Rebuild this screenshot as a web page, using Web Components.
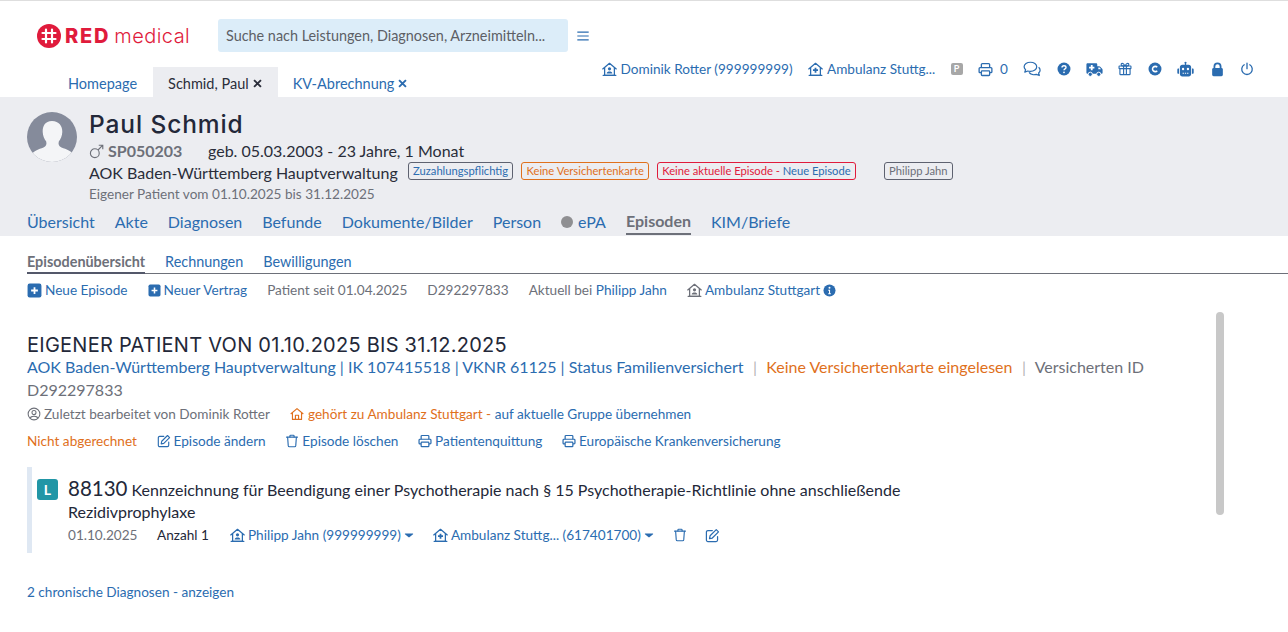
<!DOCTYPE html>
<html lang="de">
<head>
<meta charset="utf-8">
<title>RED medical</title>
<style>
  html, body { margin: 0; height: 100%; background: #fff; overflow: hidden; }
  body { font-family: Lato, "Liberation Sans", sans-serif; color: #2a2d3a; }
</style>
</head>
<body>
<rm-header></rm-header>
<rm-patient></rm-patient>
<rm-episodes></rm-episodes>

<script>
const ICONS = {
  housePerson: '<g fill="none" stroke="currentColor" stroke-width="1.35" stroke-linejoin="round" stroke-linecap="round"><path d="M.8 7.4 8 1.4l7.2 6"/><path d="M2.8 6.2v8h10.400v-8"/><path d="M1.200 14.200h13.600"/></g><circle cx="8" cy="7.300" r="1.700" fill="currentColor"/><path d="M5 12.200c0-2.600 6-2.600 6 0z" fill="currentColor"/>',
  housePlus: '<g fill="none" stroke="currentColor" stroke-width="1.35" stroke-linejoin="round" stroke-linecap="round"><path d="M.8 7.400 8 1.400l7.200 6"/><path d="M2.800 6.200v8h10.400v-8"/><path d="M1.200 14.200h13.600"/></g><path d="M8 6v5.400M5.300 8.700h5.400" stroke="currentColor" stroke-width="1.900"/>',
  house: '<g fill="none" stroke="currentColor" stroke-width="1.3" stroke-linejoin="round"><path d="M.8 8 8 1.800l7.200 6.200"/><path d="M2.800 6.600v7.600h10.400V6.600"/><path d="M6.200 14.200V9.400h3.600v4.800"/></g>',
  print: '<g fill="none" stroke="currentColor" stroke-width="1.400" stroke-linejoin="round"><path d="M3.600 6V2.700c0-.6.4-1 1-1h6.800c.6 0 1 .4 1 1V6"/><path d="M3.400 11.400H2.200c-.6 0-1-.4-1-1V7c0-.6.4-1 1-1h11.600c.6 0 1 .4 1 1v3.400c0 .6-.4 1-1 1h-1.200"/><rect x="3.600" y="9.400" width="8.800" height="5" rx=".8"/></g>',
  comments: '<g fill="none" stroke="currentColor" stroke-width="1.100" stroke-linejoin="round"><path d="M6.600 2C3.500 2 1 3.800 1 6c0 1 .5 1.900 1.300 2.600L1.600 10.800l2.600-1c.7.2 1.500.3 2.400.3 3.100 0 5.600-1.800 5.600-4.100S9.700 2 6.600 2z"/><path d="M13.900 6.400c.8.7 1.300 1.600 1.300 2.600 0 1-.5 1.900-1.300 2.600l.6 2.200-2.600-1c-2.200.6-5.300 0-6.500-1.800"/></g>',
  question: '<circle cx="8" cy="8" r="7.400" fill="currentColor"/><path d="M5.700 6.300c0-1.300 1-2.100 2.300-2.100s2.300.8 2.300 2c0 1.700-2.300 1.600-2.300 3.300" fill="none" stroke="#fff" stroke-width="1.600"/><circle cx="8" cy="11.800" r="1" fill="#fff"/>',
  ambulance: '<path d="M.4 3.200C.4 2.500.9 2 1.600 2h7.800c.7 0 1.200.5 1.200 1.200V5h1.800c.4 0 .8.2 1 .4l1.800 2c.3.3.4.6.4 1V11c0 .6-.4 1-1 1H1.600C.9 12 .4 11.500.4 10.800z" fill="currentColor"/><path d="M5.400 3.800v5M2.900 6.300h5" stroke="#fff" stroke-width="1.700"/><path d="M11.600 6.200h1.200l1.400 1.600h-2.600z" fill="#fff"/><circle cx="4" cy="12.500" r="2" fill="currentColor" stroke="#fff" stroke-width=".9"/><circle cx="12" cy="12.500" r="2" fill="currentColor" stroke="#fff" stroke-width=".9"/>',
  gift: '<g fill="none" stroke="currentColor" stroke-width="1.300" stroke-linejoin="round"><rect x="1.200" y="4.600" width="13.600" height="3" rx=".5"/><path d="M2.200 7.600v6.100c0 .4.300.8.800.8h10c.5 0 .8-.4.8-.8V7.600"/><path d="M6.400 4.600v9.900M9.600 4.600v9.900"/><path d="M8 4.500C7 2.500 5.900 1.400 4.800 1.500 3.100 1.700 3.300 4.500 5 4.500zM8 4.500c1-2 2.100-3.100 3.200-3 1.700.2 1.500 3-.2 3z"/></g>',
  copyright: '<circle cx="8" cy="8" r="7.400" fill="currentColor"/><path d="M10.500 6.100A3 3 0 1 0 10.500 9.900" fill="none" stroke="#fff" stroke-width="1.800"/>',
  robot: '<path d="M8 .6a1 1 0 0 1 .6 1.800V3.600H11c1.300 0 2.300 1 2.300 2.300v6.300c0 1.300-1 2.300-2.300 2.300H5c-1.300 0-2.300-1-2.300-2.300V5.900c0-1.300 1-2.300 2.300-2.300h2.400V2.400A1 1 0 0 1 8 .6z" fill="currentColor"/><path d="M.3 8c0-.6.4-1 1-1h.6v5h-.6c-.6 0-1-.4-1-1zM15.700 8c0-.6-.4-1-1-1h-.6v5h.6c.6 0 1-.4 1-1z" fill="currentColor"/><circle cx="5.700" cy="7.500" r="1.100" fill="#fff"/><circle cx="10.300" cy="7.500" r="1.100" fill="#fff"/><path d="M5.300 11.500h5.400" stroke="#fff" stroke-width="1.100" stroke-dasharray="1.200 .9"/>',
  lock: '<path d="M4.700 7V4.700a3.300 3.300 0 0 1 6.600 0V7" fill="none" stroke="currentColor" stroke-width="1.900"/><rect x="2.300" y="6.500" width="11.400" height="8.700" rx="1.500" fill="currentColor"/>',
  power: '<g fill="none" stroke="currentColor" stroke-width="1.500" stroke-linecap="round"><path d="M8 1.200v6.400"/><path d="M4.800 3.200a6 6 0 1 0 6.400 0"/></g>',
  edit: '<g fill="none" stroke="currentColor" stroke-width="1.300" stroke-linejoin="round" stroke-linecap="round"><path d="M13.400 9.200v3.700c0 .9-.7 1.600-1.600 1.600H3.100c-.9 0-1.600-.7-1.600-1.600V4.300c0-.9.700-1.600 1.600-1.600h4.700"/><path d="M12 1.700l2.400 2.400-6.600 6.600-3 .6.600-3z"/></g>',
  trash: '<g fill="none" stroke="currentColor" stroke-width="1.300" stroke-linejoin="round" stroke-linecap="round"><path d="M1.800 3.600h12.400"/><path d="M5.600 3.400V2.300c0-.5.400-.9.900-.9h3c.5 0 .9.400.9.900v1.100"/><path d="M3 3.800l.7 9.500c.1.800.6 1.300 1.300 1.300h6c.7 0 1.200-.5 1.300-1.300l.7-9.500"/></g>',
  user: '<circle cx="8" cy="8" r="6.700" fill="none" stroke="currentColor" stroke-width="1.200"/><circle cx="8" cy="6.400" r="2.300" fill="none" stroke="currentColor" stroke-width="1.200"/><path d="M3.800 12.900c.5-3 7.900-3 8.400 0" fill="none" stroke="currentColor" stroke-width="1.200"/>',
  plusBox: '<rect x=".6" y=".6" width="14.800" height="14.800" rx="2.200" fill="currentColor"/><path d="M8 4.400v7.200M4.400 8h7.200" stroke="#fff" stroke-width="1.900"/>',
  info: '<circle cx="8" cy="8" r="7.400" fill="currentColor"/><circle cx="8" cy="4.700" r="1.200" fill="#fff"/><path d="M6.400 7.100h2.300v4.300h1v1.100H6.400v-1.100h1V8.200h-1z" fill="#fff"/>',
  caret: '<path d="M2 5.500h12c.6 0 .9.700.5 1.100L8.600 11.600c-.3.300-.9.300-1.200 0L1.500 6.600c-.4-.4-.1-1.100.5-1.100z" fill="currentColor"/>',
  mars: '<g fill="none" stroke="currentColor" stroke-width="1.200"><circle cx="6.200" cy="9.800" r="4.700"/><path d="M9.600 6.400 14.700 1.300M10.400 1.300h4.300v4.300"/></g>',
  menu: '<path d="M1.500 3.500h13M1.500 8h13M1.500 12.500h13" stroke="currentColor" stroke-width="1.300" fill="none"/>',
  close: '<path d="M3 3l10 10M13 3 3 13" stroke="currentColor" stroke-width="2.800" fill="none"/>'
};

class RmIcon extends HTMLElement {
  connectedCallback() {
    const size = this.getAttribute('size') || 14;
    this.attachShadow({ mode: 'open' }).innerHTML = `
      <style>
        :host { display: inline-flex; flex: none; line-height: 0; }
      </style>
      <svg width="${size}" height="${size}" viewBox="0 0 16 16">${ICONS[this.getAttribute('name')] || ''}</svg>`;
  }
}

class RmLogo extends HTMLElement {
  constructor() {
    super();
    this.attachShadow({ mode: 'open' }).innerHTML = `
      <style>
        :host { display: flex; align-items: center; gap: 4px; color: #e01b3c; line-height: 1; }
        b { font: 800 20px Inter, sans-serif; letter-spacing: 1.800px; }
        span { font: 300 20px Inter, sans-serif; letter-spacing: .45px; }
      </style>
      <svg width="24" height="24" viewBox="0 0 24 24">
        <circle cx="12" cy="12" r="12" fill="currentColor"/>
        <path d="M9 5.500v13M15 5.500v13M5.500 9h13M5.500 15h13" stroke="#fff" stroke-width="2.200" stroke-linecap="round"/>
      </svg>
      <b>RED</b><span>medical</span>`;
  }
}

class RmHeader extends HTMLElement {
  constructor() {
    super();
    this.attachShadow({ mode: 'open' }).innerHTML = `
      <style>
        :host { display: block; position: relative; height: 96px; border-top: 1px solid #dedede; color: #2b6cb0; }
        .top { display: flex; align-items: center; padding: 18px 0 0 37px; }
        rm-logo { width: 181px; }
        .search { width: 342px; height: 33px; padding-left: 8px; display: flex; align-items: center; background: #dcedf9; border-radius: 3px; color: #5d5f66; font-size: 14.400px; }
        .menu { margin-left: 8px; }
        .tabs { display: flex; margin-top: 15px; padding-left: 53px; font-size: 14.500px; }
        .tab { height: 30px; box-sizing: border-box; padding: 2px 15px 0; display: flex; align-items: center; gap: 3px; }
        .tabs .tab:first-child { padding-right: 16px; }
        .tab.on { background: #ecedf1; color: #2a2d3a; }
        .tools { position: absolute; right: 34px; top: 60px; height: 16px; display: flex; align-items: center; gap: 15.400px; font-size: 13.600px; white-space: nowrap; }
        .lbl { display: flex; align-items: center; gap: 4px; }
        .zero { gap: 7px; }
        .p { width: 12px; height: 12px; background: #a7a7a7; border-radius: 2px; color: #fff; font: 700 9px/12px Lato, sans-serif; text-align: center; }
      </style>
      <div class="top">
        <rm-logo></rm-logo>
        <div class="search">Suche nach Leistungen, Diagnosen, Arzneimitteln...</div>
        <rm-icon class="menu" name="menu" size="14"></rm-icon>
      </div>
      <div class="tabs">
        <div class="tab">Homepage</div>
        <div class="tab on">Schmid, Paul <rm-icon name="close" size="11"></rm-icon></div>
        <div class="tab">KV-Abrechnung <rm-icon name="close" size="11"></rm-icon></div>
      </div>
      <div class="tools">
        <span class="lbl"><rm-icon name="housePerson" size="15"></rm-icon>Dominik Rotter (999999999)</span>
        <span class="lbl"><rm-icon name="housePlus" size="15"></rm-icon>Ambulanz Stuttg...</span>
        <span class="p">P</span>
        <span class="lbl zero"><rm-icon name="print" size="15"></rm-icon>0</span>
        <rm-icon name="comments" size="18"></rm-icon>
        <rm-icon name="question"></rm-icon>
        <rm-icon name="ambulance" size="17"></rm-icon>
        <rm-icon name="gift"></rm-icon>
        <rm-icon name="copyright"></rm-icon>
        <rm-icon name="robot" size="17"></rm-icon>
        <rm-icon name="lock" size="15"></rm-icon>
        <rm-icon name="power"></rm-icon>
      </div>`;
  }
}

class RmBadge extends HTMLElement {
  constructor() {
    super();
    this.attachShadow({ mode: 'open' }).innerHTML = `
      <style>
        :host { display: inline-flex; align-items: center; height: 16px; padding: 0 4.300px; border: 1px solid var(--line, #5e6270); border-radius: 3px; font-size: 11.200px; color: var(--ink, #2b6cb0); white-space: nowrap; }
      </style>
      <slot></slot>`;
  }
}

class RmPatient extends HTMLElement {
  constructor() {
    super();
    this.attachShadow({ mode: 'open' }).innerHTML = `
      <style>
        :host { display: block; height: 139px; background: #ecedf1; padding: 0 0 0 27px; box-sizing: border-box; }
        .head { display: flex; gap: 12px; padding-top: 14px; height: 96px; box-sizing: border-box; }
        .avatar { width: 50px; height: 50px; margin-top: 1px; border-radius: 50%; overflow: hidden; flex: none; }
        h1 { margin: 0; font: 500 24.500px/26px Inter, sans-serif; color: #232839; letter-spacing: .9px; }
        .r2 { display: flex; align-items: center; font-size: 16px; line-height: 22px; margin-top: 3px; }
        .sp { color: #6d7079; font-weight: 700; margin-left: 4px; width: 100px; }
        .r3 { display: flex; align-items: center; gap: 10px; font-size: 16px; line-height: 22px; }
        .badges { display: flex; gap: 7.800px; margin-bottom: 4px; }
        .r4 { font-size: 13.600px; line-height: 20px; color: #6d7079; }
        nav { display: flex; gap: 20px; font-size: 16px; color: #2b6cb0; margin-top: 14px; }
        nav span { padding: 4px 0 2px; line-height: 20px; display: flex; align-items: center; gap: 5px; }
        nav i { width: 12px; height: 12px; border-radius: 50%; background: #8f8f92; }
        nav .on { color: #6d7079; font-weight: 700; border-bottom: 2px solid #6d7079; }
      </style>
      <div class="head">
        <svg class="avatar" viewBox="0 0 50 50">
          <rect width="50" height="50" fill="#858b9b"/>
          <path d="M25 9c-7 0-9.500 5-9.300 11 .2 4 1.500 7 3.500 9.500.8 3-.3 5-2.700 6-5 1.700-9.500 3.500-11 6L5 50h40l.500-8.500c-1.500-2.500-6-4.300-11-6-2.400-1-3.500-3-2.700-6 2-2.500 3.300-5.500 3.500-9.500C35.500 14 32 9 25 9z" fill="#f4f5f7"/>
        </svg>
        <div>
          <h1>Paul Schmid</h1>
          <div class="r2"><rm-icon name="mars" size="15" style="color:#6d7079"></rm-icon><span class="sp">SP050203</span><span>geb. 05.03.2003 - 23 Jahre, 1 Monat</span></div>
          <div class="r3">AOK Baden-Württemberg Hauptverwaltung
            <div class="badges">
              <rm-badge>Zuzahlungspflichtig</rm-badge>
              <rm-badge style="--line:#e0701c;--ink:#e0701c">Keine Versichertenkarte</rm-badge>
              <rm-badge style="--line:#e01b3c;--ink:#e01b3c">Keine aktuelle Episode -&nbsp;<span style="color:#2b6cb0">Neue Episode</span></rm-badge>
              <rm-badge style="--ink:#6d7079;margin-left:20px">Philipp Jahn</rm-badge>
            </div>
          </div>
          <div class="r4">Eigener Patient vom 01.10.2025 bis 31.12.2025</div>
        </div>
      </div>
      <nav>
        <span>Übersicht</span><span>Akte</span><span>Diagnosen</span><span>Befunde</span><span>Dokumente/Bilder</span><span>Person</span><span><i></i>ePA</span><span class="on">Episoden</span><span>KIM/Briefe</span>
      </nav>`;
  }
}

class RmEpisodeCard extends HTMLElement {
  constructor() {
    super();
    this.attachShadow({ mode: 'open' }).innerHTML = `
      <style>
        :host { display: flex; gap: 10px; width: 900px; height: 86px; box-sizing: border-box; border-left: 5px solid #dfe8f3; padding: 12px 0 0 5px; margin-top: 14px; }
        .l { width: 21px; height: 21px; border-radius: 3px; background: #2196a6; color: #fff; font: 700 14px/21px Lato, sans-serif; text-align: center; flex: none; }
        .title { font-size: 16px; line-height: 22px; width: 850px; color: #232839; }
        .title b { font-weight: 400; font-size: 20.500px; line-height: 0; }
        .meta { display: flex; align-items: center; font-size: 13.600px; margin-top: 1px; color: #2b6cb0; height: 22px; }
        .date { color: #6d7079; width: 89px; }
        .n { color: #232839; width: 73px; }
        .lnk { display: flex; align-items: center; gap: 3px; margin-right: 19px; }
        rm-icon.end { margin-right: 18px; }
      </style>
      <div class="l">L</div>
      <div>
        <div class="title"><b>88130</b> <span>Kennzeichnung für Beendigung einer Psychotherapie nach § 15 Psychotherapie-Richtlinie ohne anschließende</span> <span>Rezidivprophylaxe</span></div>
        <div class="meta">
          <span class="date">01.10.2025</span><span class="n">Anzahl 1</span>
          <span class="lnk"><rm-icon name="housePerson" size="15"></rm-icon>Philipp Jahn (999999999)<rm-icon name="caret" size="10"></rm-icon></span>
          <span class="lnk"><rm-icon name="housePlus" size="15"></rm-icon>Ambulanz Stuttg... (617401700)<rm-icon name="caret" size="10"></rm-icon></span>
          <rm-icon class="end" name="trash"></rm-icon>
          <rm-icon class="end" name="edit" size="15"></rm-icon>
        </div>
      </div>`;
  }
}

class RmEpisodes extends HTMLElement {
  constructor() {
    super();
    this.attachShadow({ mode: 'open' }).innerHTML = `
      <style>
        :host { display: block; position: relative; padding: 15px 0 0 27px; font-size: 13.600px; color: #2b6cb0; }
        .sub { display: flex; gap: 20px; border-bottom: 1px solid #6d7079; font-size: 14.400px; }
        .sub span { line-height: 21px; padding-bottom: 1px; margin-bottom: -1px; }
        .sub .on { color: #6d7079; font-weight: 700; border-bottom: 2px solid #54586a; padding-bottom: 0; }
        .act { display: flex; align-items: center; gap: 20px; height: 32px; }
        .act span { display: flex; align-items: center; gap: 3px; }
        .g { color: #6d7079; }
        .main { width: 1165px; }
        h2 { margin: 0; padding-top: 29px; font: 400 20px/20px Inter, sans-serif; color: #232839; letter-spacing: .25px; }
        .ins { font-size: 16px; line-height: 23px; }
        .o { color: #e0701c; }
        .sep { color: #b5b5b5; margin: 0 5px 0 5.500px; }
        .row { display: flex; align-items: center; height: 24px; margin-top: 1px; }
        .row span { display: flex; align-items: center; gap: 3px; }
        .links { gap: 19.700px; margin-top: 3px; }
        .more { margin-top: 31px; }
        .thumb { position: absolute; left: 1216px; top: 76px; width: 8px; height: 203px; border-radius: 4px; background: #c8c8c8; }
      </style>
      <div class="sub"><span class="on">Episodenübersicht</span><span>Rechnungen</span><span>Bewilligungen</span></div>
      <div class="act">
        <span><rm-icon name="plusBox" size="15"></rm-icon>Neue Episode</span>
        <span><rm-icon name="plusBox" size="13"></rm-icon>Neuer Vertrag</span>
        <span class="g">Patient seit 01.04.2025</span>
        <span class="g">D292297833</span>
        <span class="g" style="gap:0">Aktuell bei&nbsp;<a style="color:#2b6cb0">Philipp Jahn</a></span>
        <span><rm-icon class="g" name="housePerson" size="15"></rm-icon>Ambulanz Stuttgart <rm-icon name="info" size="13"></rm-icon></span>
      </div>
      <div class="main">
        <h2>EIGENER PATIENT VON 01.10.2025 BIS 31.12.2025</h2>
        <div class="ins">AOK Baden-Württemberg Hauptverwaltung | IK 107415518 | VKNR 61125 | Status Familienversichert <span class="sep">|</span> <span class="o">Keine Versichertenkarte eingelesen</span> <span class="sep">|</span> <span class="g">Versicherten ID</span> <span class="g">D292297833</span></div>
        <div class="row">
          <span class="g"><rm-icon name="user" size="14"></rm-icon>Zuletzt bearbeitet von Dominik Rotter</span>
          <span class="o" style="margin-left:20px;gap:4px"><rm-icon name="house"></rm-icon>gehört zu Ambulanz Stuttgart -&nbsp;</span>
          <span>auf aktuelle Gruppe übernehmen</span>
        </div>
        <div class="row links">
          <span class="o">Nicht abgerechnet</span>
          <span><rm-icon name="edit"></rm-icon>Episode ändern</span>
          <span><rm-icon name="trash"></rm-icon>Episode löschen</span>
          <span><rm-icon name="print"></rm-icon>Patientenquittung</span>
          <span><rm-icon name="print"></rm-icon>Europäische Krankenversicherung</span>
        </div>
        <rm-episode-card></rm-episode-card>
        <div class="more">2 chronische Diagnosen - anzeigen</div>
      </div>
      <div class="thumb"></div>`;
  }
}

customElements.define('rm-icon', RmIcon);
customElements.define('rm-logo', RmLogo);
customElements.define('rm-header', RmHeader);
customElements.define('rm-badge', RmBadge);
customElements.define('rm-patient', RmPatient);
customElements.define('rm-episode-card', RmEpisodeCard);
customElements.define('rm-episodes', RmEpisodes);
</script>
</body>
</html>
